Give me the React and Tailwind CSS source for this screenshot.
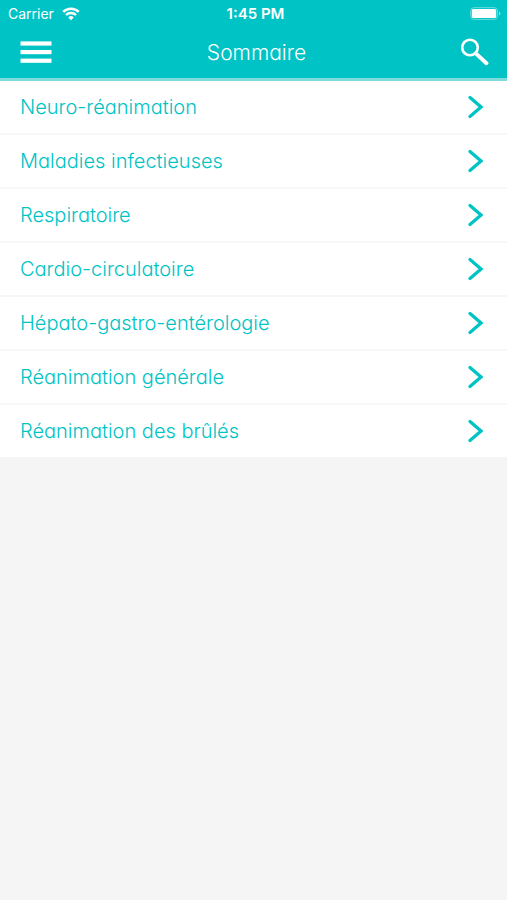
import React from 'react';

const chapters = [
  'Neuro-réanimation',
  'Maladies infectieuses',
  'Respiratoire',
  'Cardio-circulatoire',
  'Hépato-gastro-entérologie',
  'Réanimation générale',
  'Réanimation des brûlés',
];

const WifiIcon = () => (
  <svg width="18" height="14" viewBox="0 0 18 14" fill="none" stroke="currentColor" strokeWidth="2.5" aria-hidden="true">
    <path d="M1.2 4.9a11 11 0 0 1 15.6 0" />
    <path d="M4 8a7 7 0 0 1 10 0" />
    <path d="M9 13.2 6.3 10.4a3.9 3.9 0 0 1 5.4 0Z" fill="currentColor" stroke="none" />
  </svg>
);

const BatteryIcon = () => (
  <svg width="33" height="14" viewBox="0 0 33 14" aria-hidden="true">
    <rect x="0.6" y="0.6" width="27" height="11.8" rx="3.5" fill="none" stroke="#fff" strokeOpacity="0.4" />
    <rect x="1.8" y="2" width="24.4" height="9" rx="1.5" fill="#fff" />
    <path d="M29 4.4c2 .8 2 3.4 0 4.2Z" fill="#fff" fillOpacity="0.5" />
  </svg>
);

const MenuIcon = () => (
  <svg width="32" height="24" viewBox="0 0 32 24" fill="currentColor" aria-hidden="true">
    <rect x="0.5" y="1.4" width="31" height="4.2" />
    <rect x="0.5" y="10" width="31" height="4.2" />
    <rect x="0.5" y="18.6" width="31" height="4.2" />
  </svg>
);

const SearchIcon = () => (
  <svg width="28" height="28" viewBox="0 0 28 28" fill="none" stroke="currentColor" aria-hidden="true">
    <circle cx="9" cy="9.5" r="7.8" strokeWidth="2.6" />
    <path d="m14.8 15.4 10.6 9.8" strokeWidth="4" strokeLinecap="round" />
  </svg>
);

const ChevronIcon = () => (
  <svg width="16" height="24" viewBox="0 0 16 24" fill="none" stroke="currentColor" strokeWidth="3.2" strokeLinecap="round" aria-hidden="true">
    <path d="M3 2.5 14 12 3 21.5" />
  </svg>
);

const StatusBar = () => (
  <div className="grid h-7 grid-cols-[1fr_auto_1fr] items-center pr-1 pl-2 font-normal">
    <div className="flex items-center gap-2 text-sm">
      <span>Carrier</span>
      <WifiIcon />
    </div>
    <span className="text-[15px] font-semibold">1:45 PM</span>
    <div className="flex justify-end">
      <BatteryIcon />
    </div>
  </div>
);

const App = () => {
  return (
    <div className="min-h-screen bg-[#f5f5f5] font-['Inter',sans-serif] font-light">
      <header className="border-b-3 border-[#7fdcdc] bg-[#00c3c5] text-white">
        <StatusBar />
        <div className="flex h-[50px] items-center justify-between pr-[18px] pb-0.5 pl-5">
          <button type="button" aria-label="Menu">
            <MenuIcon />
          </button>
          <h1 className="pt-0.5 text-[21px] [font-feature-settings:'cv11']">Sommaire</h1>
          <button type="button" aria-label="Rechercher">
            <SearchIcon />
          </button>
        </div>
      </header>

      <nav>
        <ul className="divide-y-2 divide-[#f7f7f7] bg-white text-[#00c3c5]">
          {chapters.map((chapter) => (
            <li key={chapter}>
              <a
                href="#"
                className="flex items-center justify-between py-3 pr-6 pl-5 text-[20px] leading-7 [font-feature-settings:'cv11']"
              >
                <span>{chapter}</span>
                <ChevronIcon />
              </a>
            </li>
          ))}
        </ul>
      </nav>
    </div>
  );
};

export default App;
